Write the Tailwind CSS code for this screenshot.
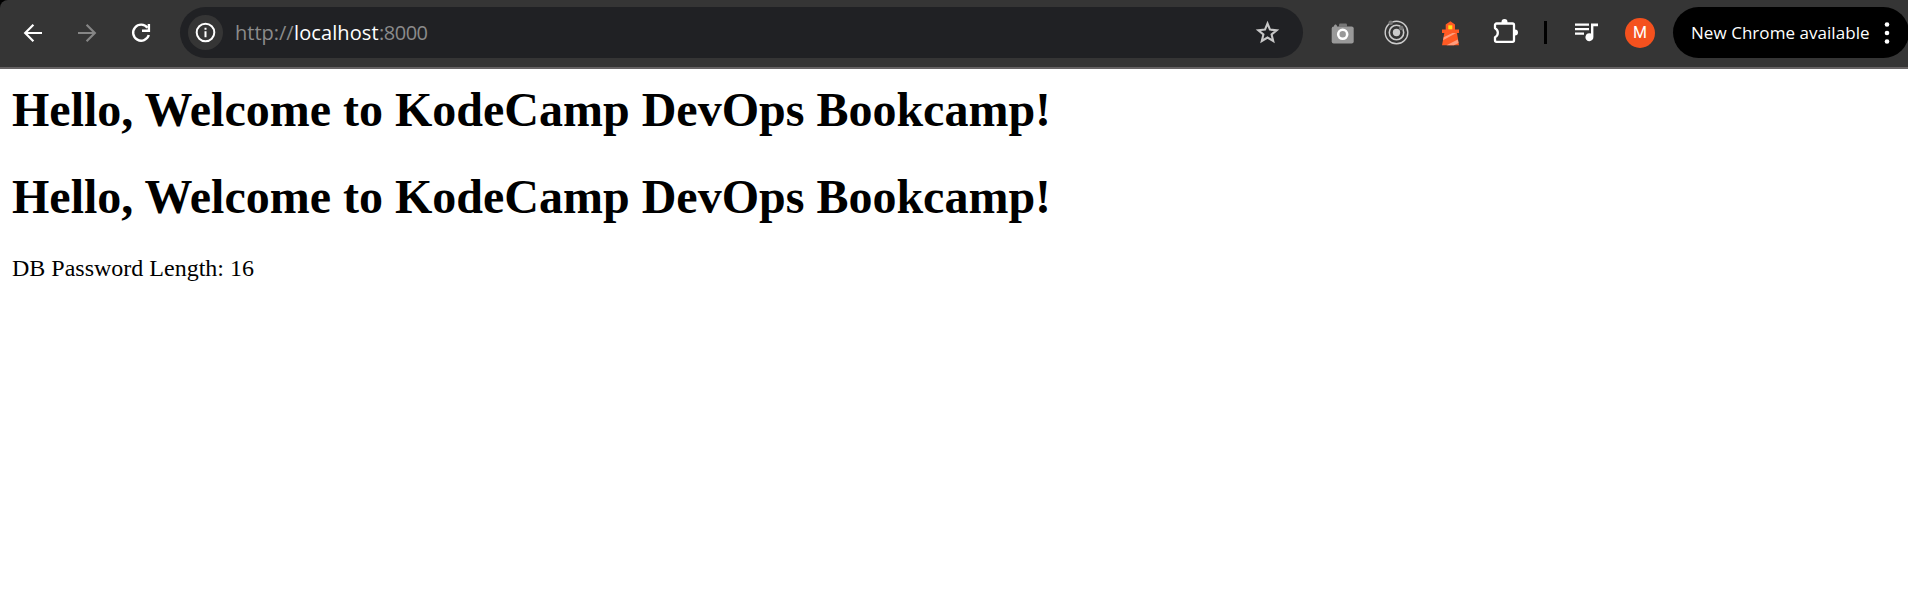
<!DOCTYPE html>
<html lang="en">
<head>
<meta charset="utf-8">
<title>localhost:8000</title>
<script src="https://cdn.jsdelivr.net/npm/@tailwindcss/browser@4"></script>
</head>
<body class="bg-white text-black overflow-hidden">
<div class="bg-black">
<header class="flex h-[69px] items-center rounded-tl-[8px] border-b-2 border-[#666364] bg-[#353535] pb-0.5 whitespace-nowrap font-['Open_Sans',sans-serif]">
  <!-- navigation -->
  <svg class="ml-[21px] size-6 shrink-0" viewBox="0 0 24 24" fill="none" stroke="#fff" stroke-width="2.2"><path d="M21 12H4.500M12.400 3.800 4.200 12l8.200 8.200"/></svg>
  <svg class="ml-[30px] size-6 shrink-0" viewBox="0 0 24 24" fill="none" stroke="#868686" stroke-width="2.2"><path d="M3 12h16.500M11.600 3.800l8.200 8.200-8.200 8.200"/></svg>
  <svg class="ml-[30px] size-6 shrink-0" viewBox="0 0 24 24" fill="none" stroke="#fff" stroke-width="2.4"><path d="M18.500 6.800A8 8 0 1 0 19.800 14"/><path d="M19.900 3v6.700H13"/></svg>
  <!-- address bar -->
  <div class="ml-[27px] flex h-[51px] w-[1123px] shrink-0 items-center rounded-full bg-[#202124] pl-2">
    <div class="flex size-[35px] shrink-0 items-center justify-center rounded-full bg-[#353535]">
      <svg class="size-[21px]" viewBox="0 0 21 21" fill="none" stroke="#fff" stroke-width="2"><circle cx="10.500" cy="10.500" r="8.800"/><path d="M10.500 9.300v5.900M10.500 5.700v2"/></svg>
    </div>
    <div class="ml-[12px] flex text-[20px] leading-[26px] text-[#8b8b8b]"><span class="w-[59px] tracking-[0px]">http://</span><span class="w-[85px] tracking-[0.1px] text-white">localhost</span><span class="tracking-[-0.5px]">:8000</span></div>
    <svg class="mr-[23px] ml-auto size-[25px]" viewBox="0 0 25 25" fill="none" stroke="#c7c7c7" stroke-width="2.1"><path d="m12.500 3.500 2.500 6.100 6.700.6-5.100 4.300 1.600 6.500-5.700-3.500-5.700 3.500 1.600-6.500-5.100-4.300 6.700-.6z"/></svg>
  </div>
  <!-- extensions -->
  <svg class="ml-[28px] size-6 shrink-0" viewBox="0 0.500 24 24"><path fill="#999" d="M3 6.500V5.200l1-1.200h1l1 1.200v1.300h2V8H3z"/><path fill="#777" d="M8 6V4.200Q8 3 9.200 3h5.600Q16 3 16 4.200V6z"/><rect x=".7" y="6" width="22" height="17" rx="2" fill="#999"/><circle cx="11.700" cy="13.800" r="4.500" fill="#999" stroke="#fff" stroke-width="2.600"/></svg>
  <svg class="ml-[29px] size-[25px] shrink-0" viewBox="0 0 25 25" fill="none" stroke="#ccc"><circle cx="12.500" cy="12.500" r="11.300" stroke-width="1.400"/><circle cx="12.500" cy="12.500" r="7.200" stroke-width="1.600"/><circle cx="12.500" cy="12.500" r="3.700" fill="#ccc" stroke="none"/><g fill="#777" stroke="none"><circle cx="6.700" cy="2.800" r="2.300"/><circle cx="17.200" cy="8" r="2.300"/></g></svg>
  <svg class="ml-[29px] size-[26px] shrink-0" viewBox="0 0 26 26"><path fill="#ff5a24" d="M7.700 9.500V4.500L12.400 1.200 17 4.500v5h4V13h-2L21 25.200H4L6.300 13H4V9.500z"/><path fill="#ffe01b" d="M10.300 5.300h4v4h-4z"/><path fill="#ff9d7d" d="M5.700 17.200 14.500 13h3.700L5 20.300zM8.500 25.200l11.300-5.800.7 3.500-4.600 2.300z"/></svg>
  <svg class="ml-[27px] size-[27px] shrink-0" viewBox="0 0 27 27"><path fill="none" stroke="#fff" stroke-width="2.300" stroke-linejoin="round" d="M5.500 4.500H21.500a1.500 1.500 0 0 1 1.500 1.500V21.300a1.500 1.500 0 0 1-1.500 1.500H5.500A1.500 1.500 0 0 1 4 21.300V18.300A5 5 0 0 0 4 9.300V6A1.500 1.500 0 0 1 5.500 4.500Z"/><path fill="#fff" d="M10.500 4V3a3 3 0 0 1 6 0V4zM23.500 10.500H24a3 3 0 0 1 0 6h-.5z"/></svg>
  <div class="ml-[26px] h-[23px] w-[2.5px] shrink-0 bg-black"></div>
  <svg class="ml-[27.5px] size-[26px] shrink-0" viewBox="0 0 26 26"><path fill="#fff" d="M1 3.500h14v2.200H1zM1 8h14v2.200H1zM1 12.600h9v2.200H1zM17 3.500h7v2.700h-4.600V17a4 4 0 1 1-2.400-3.500z"/></svg>
  <div class="ml-[25px] flex size-[30px] shrink-0 items-center justify-center rounded-full bg-[#f4511e] pt-px font-[Roboto,sans-serif] text-[16px] text-white">M</div>
  <!-- update button and menu -->
  <div class="ml-[18px] flex h-[51px] w-[236px] shrink-0 items-center rounded-full bg-black pl-[18px] text-[17px] text-white">
    <span class="w-[178px] tracking-[0.05px]">New Chrome available</span>
    <svg class="ml-[15px] h-6 w-[6px] shrink-0" viewBox="0 0 6 24" fill="#fff"><circle cx="3" cy="3.500" r="2.300"/><circle cx="3" cy="12" r="2.300"/><circle cx="3" cy="20.500" r="2.300"/></svg>
  </div>
</header>
</div>
<main class="px-3 pt-[13px] font-['Liberation_Serif',serif]">
  <h1 class="text-[48px] leading-[55px] font-bold">Hello, Welcome to KodeCamp DevOps Bookcamp!</h1>
  <h1 class="mt-8 text-[48px] leading-[55px] font-bold">Hello, Welcome to KodeCamp DevOps Bookcamp!</h1>
  <p class="mt-[31px] text-[24px] leading-[27px]">DB Password Length: 16</p>
</main>
</body>
</html>
